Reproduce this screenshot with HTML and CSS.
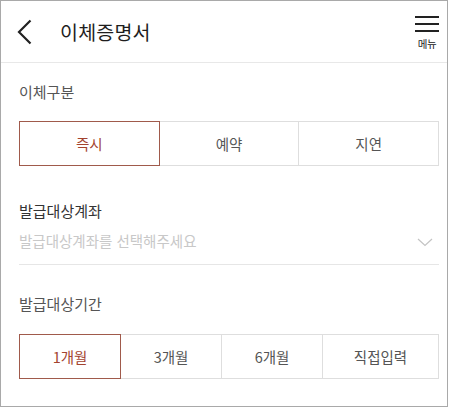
FILE: index.html
```html
<!DOCTYPE html>
<html lang="ko">
<head>
<meta charset="utf-8">
<link rel="stylesheet" href="styles.css">
</head>
<body>
<div class="frame">
  <header class="header">
    <div class="back" aria-label="뒤로">
      <svg width="16" height="26" viewBox="0 0 16 26"><path d="M13.5 1.5 L2 13 L13.5 24.5" fill="none" stroke="#222" stroke-width="2.2"/></svg>
    </div>
    <h1 class="title">이체증명서</h1>
    <div class="menu">
      <span class="bars"><i></i><i></i><i></i></span>
      <span class="menu-text">메뉴</span>
    </div>
  </header>
  <main class="content">
    <div class="label l1">이체구분</div>
    <div class="seg seg3">
      <div class="opt on">즉시</div>
      <div class="opt">예약</div>
      <div class="opt">지연</div>
    </div>
    <div class="label l2">발급대상계좌</div>
    <div class="select">
      <span class="ph">발급대상계좌를 선택해주세요</span>
      <svg width="16" height="9" viewBox="0 0 16 9"><path d="M1 1 L8 7.5 L15 1" fill="none" stroke="#c4c4c4" stroke-width="1.2"/></svg>
    </div>
    <div class="label l3">발급대상기간</div>
    <div class="seg seg4">
      <div class="opt on">1개월</div>
      <div class="opt">3개월</div>
      <div class="opt">6개월</div>
      <div class="opt">직접입력</div>
    </div>
  </main>
</div>
</body>
</html>
```
FILE: styles.css
```css
html, body { margin: 0; padding: 0; background: #fff; }
body { font-family: "Noto Sans CJK KR", "Noto Sans", sans-serif; }
.frame {
  width: 448px; height: 407px; box-sizing: border-box;
  border: 1px solid #a9a9a9; overflow: hidden;
}
.header {
  height: 62px; box-sizing: border-box; border-bottom: 1px solid #e8e8e8;
  display: flex; align-items: center; position: relative;
}
.back {
  margin: 1px 0 0 16px;
  width: 16px; height: 26px; display: flex;
}
.title {
  margin: 0 0 0 27px; font-size: 19.5px; font-weight: 400; color: #1e1e1e;
  line-height: 26px; letter-spacing: 0.2px;
}
.menu {
  margin-left: auto; margin-right: 7px;
  display: flex; flex-direction: column; align-items: center; width: 26px;
  margin-top: 4px; color: #222;
}
.bars { display: flex; flex-direction: column; gap: 5px; width: 24px; }
.bars i { display: block; height: 2px; background: #222; }
.menu-text { font-size: 10.5px; color: #222; line-height: 14px; margin-top: 5px; letter-spacing: -0.3px; }
.content { padding: 0 8px 0 18px; }
.label { font-size: 15px; line-height: 22px; color: #555; }
.l1 { margin-top: 18px; }
.l2 { margin-top: 34px; color: #333; }
.l3 { margin-top: 28px; }
.seg { display: flex; height: 45px; }
.seg3 { margin-top: 18px; }
.seg4 { margin-top: 19px; }
.opt {
  box-sizing: border-box; border: 1px solid #dedede; display: flex;
  align-items: center; justify-content: center; font-size: 14.5px; color: #555;
  position: relative;
}
.opt + .opt { margin-left: -1px; }
.opt.on { border-color: #a05a4b; color: #a3432f; z-index: 1; }
.seg3 .opt { flex: 1 1 0; }
.seg3 { width: 420px; }
.seg4 { width: 420px; }
.seg4 .opt { flex: 0 0 102px; }
.seg4 .opt:last-child { flex: 1 1 auto; }
.select {
  height: 43px; box-sizing: border-box; border-bottom: 1px solid #e6e6e6;
  display: flex; align-items: flex-start; justify-content: space-between;
  padding-top: 8px; width: 420px;
}
.ph { font-size: 14.5px; line-height: 22px; color: #c8c8c8; }
.select svg { margin-top: 8px; margin-right: 6px; }
```
